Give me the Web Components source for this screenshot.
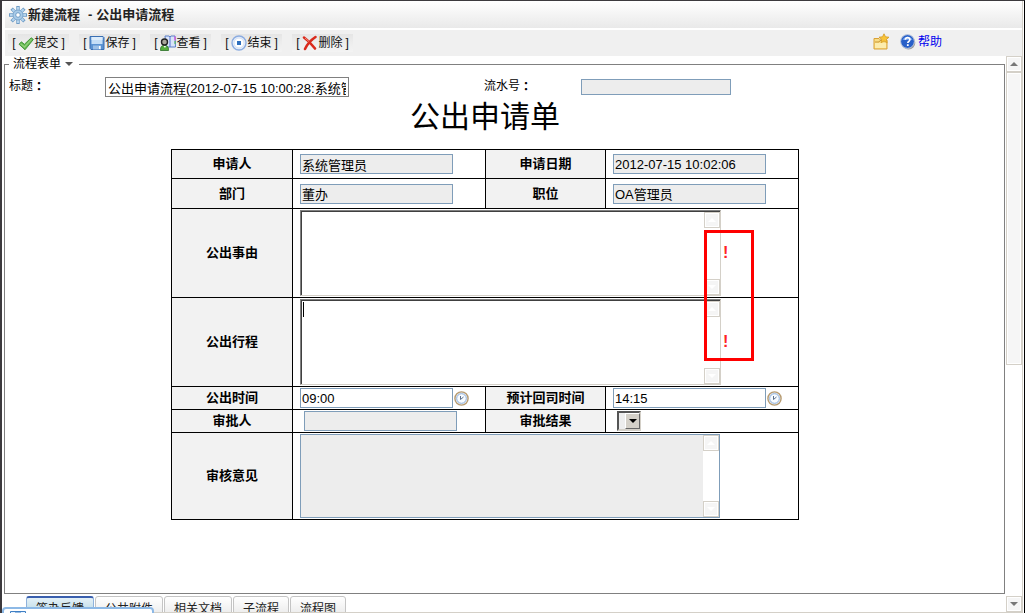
<!DOCTYPE html>
<html lang="zh-CN">
<head>
<meta charset="utf-8">
<title>新建流程 - 公出申请流程</title>
<style>
  html, body { margin: 0; height: 100%; }
  body { overflow: hidden; background: #fff; color: #000; font: 12px/16px "Liberation Sans", "Noto Sans CJK SC", sans-serif; }
</style>
</head>
<body>
<app-window>
  <title-bar slot="title" process="公出申请流程">新建流程</title-bar>
  <tool-bar slot="toolbar">
    <tool-button icon="check">提交</tool-button>
    <tool-button icon="disk">保存</tool-button>
    <tool-button icon="view">查看</tool-button>
    <tool-button icon="stop">结束</tool-button>
    <tool-button icon="cross">删除</tool-button>
    <help-links slot="end"></help-links>
  </tool-bar>
  <process-form></process-form>
  <tab-strip slot="tabs">
    <tab-item active>签办反馈</tab-item>
    <tab-item>公共附件</tab-item>
    <tab-item>相关文档</tab-item>
    <tab-item>子流程</tab-item>
    <tab-item>流程图</tab-item>
  </tab-strip>
  <scroll-rail slot="rail" class="page"></scroll-rail>
</app-window>

<script>
const define = (name, html) => customElements.define(name, class extends HTMLElement {
  constructor() {
    super();
    const root = this.attachShadow({ mode: 'open' });
    const t = document.createElement('template');
    t.innerHTML = typeof html === 'function' ? html(this) : html;
    root.append(t.content.cloneNode(true));
  }
});

const icons = {
  gear: `<svg viewBox="0 0 20 20" width="20" height="20"><g stroke="#6f9cc6" stroke-width="3.4"><path d="M10 1v18M1 10h18M3.6 3.6l12.8 12.8M16.4 3.6 3.6 16.4"/></g><g stroke="#b4d4ee" stroke-width="2"><path d="M10 2v16M2 10h16M4.3 4.3l11.4 11.4M15.7 4.3 4.3 15.7"/></g><circle cx="10" cy="10" r="5" fill="#a9cbe8" stroke="#7fa8ce"/><circle cx="10" cy="10" r="2.3" fill="#fff" stroke="#6f9cc6"/></svg>`,
  check: `<svg viewBox="0 0 16 16" width="16" height="16"><path d="M1 9.200 3.400 6.800l3 2.500L13.200 2.800l2.200 1.600L7 14.800z" fill="#5fb54c" stroke="#3f9238" stroke-width=".9"/><path d="M2.600 8.800 6.500 12l7-7.800" fill="none" stroke="#8fd07a" stroke-width="1.400"/></svg>`,
  disk: `<svg viewBox="0 0 16 16" width="16" height="16"><path d="M1 1.500h13l1 1v12H2l-1-1z" fill="#5b92d2" stroke="#3a6fb3"/><path d="M2.500 2h11v7h-11z" fill="#c5def7"/><path d="M2.500 2h11v3h-11z" fill="#dcecfb"/><path d="M4 10.500h8v4H4z" fill="#9cc0e8"/><path d="M10 11h1.500v3H10z" fill="#fff"/></svg>`,
  view: `<svg viewBox="0 0 16 16" width="16" height="16"><path d="M5 1h4l1 1 1-1h4l.5 11H6z" fill="#d9e4f8" stroke="#5b7fc8"/><path d="M10 2v10" stroke="#5573d8"/><path d="M14.500 1.500h1v4h-1z" fill="#e733d7"/><path d="M14.500 6h1v3h-1z" fill="#42b94d"/><path d="M.5 15.500c0-4 1-5 4-5s4 1 4 5z" fill="#55ae3c" stroke="#2b6e26" stroke-width=".8"/><path d="m3.500 11 1.500 2 1-2z" fill="#fff"/><circle cx="4.500" cy="7" r="3" fill="#a9a79a" stroke="#222" stroke-width="1.400"/></svg>`,
  stop: `<svg viewBox="0 0 16 16" width="16" height="16"><circle cx="8" cy="8" r="7" fill="#e5eefb" stroke="#8cace0" stroke-width="1.400"/><circle cx="8" cy="8" r="5" fill="#fff" stroke="#d4e0f4"/><path d="M6 6h4v4H6z" fill="#2f6fbe"/></svg>`,
  cross: `<svg viewBox="0 0 16 16" width="16" height="16"><path d="M2 2.500c4 2.800 7.500 6.500 11 11M13.500 2C9 5 5 9.500 3 14" fill="none" stroke="#d92a1c" stroke-width="2.600" stroke-linecap="round"/><path d="m3 3 4 3.500" stroke="#f28a78"/></svg>`,
  folder: `<svg viewBox="0 0 17 17" width="17" height="17"><path d="M1 5.500h5l1.500 1.500H14v9H1z" fill="#f9dc83" stroke="#d9a136"/><path d="M2 9h4l1-1.500h6" stroke="#c99838" fill="none"/><path d="M2 10h11v5H2z" fill="#fcecad"/><path d="m11 .8 1.500 3 3.500.4-2.600 2.200.8 3.300-3.200-1.700-3 1.700.7-3.400L6 4.200l3.500-.4z" fill="#f8c43a" stroke="#d39a24" stroke-width=".8"/></svg>`,
  help: `<svg viewBox="0 0 16 16" width="16" height="16"><circle cx="8.500" cy="8.800" r="6.800" fill="#9a9a9a"/><circle cx="7.500" cy="7.500" r="6.900" fill="#2860c8" stroke="#c4cddd"/><path d="M2.500 6a5.500 5.500 0 0 1 10 0z" fill="#6c9bec"/><path d="M5.300 5.800c0-3 4.800-2.800 4.600 0-.1 1.500-2 1.600-2.100 3.200" fill="none" stroke="#fff" stroke-width="1.700"/><path d="M6.900 10.200h1.800v1.800H6.900z" fill="#fff"/></svg>`,
  clock: `<svg viewBox="0 0 15 15" width="15" height="15"><circle cx="7.500" cy="7.500" r="6.600" fill="#e6edf7" stroke="#b79b70" stroke-width="1.400"/><circle cx="7.500" cy="7.500" r="4.800" fill="#f7fbff" stroke="#8fb0da"/><path d="M6.500 5v3.500L9.500 6" fill="none" stroke="#5a6f8c"/></svg>`
};

/* Outer frame: title, toolbar, then form + tabs beside the page scroll rail */
define('app-window', `
<style>
  :host { display: flex; flex-direction: column; position: relative; box-sizing: border-box; height: 100vh; overflow: hidden;
    border: solid #3c3a3e; border-width: 1px 1px 0 2px; border-right-color: #000; padding-right: 2px; }
  :host::before { content: ""; position: absolute; top: 0; right: 1px; bottom: 0; width: 1px; background: #d4d0c8; }
  .body { flex: 1; min-height: 0; display: flex; padding-left: 2px; gap: 1px; border-bottom: 1px solid #d4d0c8; }
  main { flex: 1; min-width: 0; display: flex; flex-direction: column; overflow: hidden; }
  .popup { position: absolute; left: 0; bottom: -11px; width: 148px; height: 13px; border: 2px solid #8db9e6; border-radius: 4px; background: #fff; }
  .popup svg { display: block; margin: 2px 0 0 6px; }
</style>
<slot name="title"></slot>
<slot name="toolbar"></slot>
<div class="body"><main><slot></slot><slot name="tabs"></slot></main><slot name="rail"></slot></div>
<div class="popup"><svg width="16" height="10" viewBox="0 0 16 10"><path d="M.5.5h15v9H.5z" fill="#eaf4ff" stroke="#3f7fc4"/><path d="M5 2h6" stroke="#3f7fc4"/></svg></div>`);

define('title-bar', el => `
<style>
  :host { display: flex; align-items: center; flex: none; height: 27px; margin-left: 3px; margin-bottom: 2px; padding-left: 3px; background: linear-gradient(#fff, #e9e9e9); color: #222; }
  svg { display: block; }
  h1 { display: flex; gap: 8px; margin: 0; font-size: 13px; line-height: 20px; font-weight: 700; }
  .process { display: flex; gap: 4px; }
</style>
${icons.gear}<h1><span><slot></slot></span><span class="process"><span>-</span><span>${el.getAttribute('process')}</span></span></h1>`);

define('tool-bar', `
<style>
  :host { display: flex; align-items: center; flex: none; height: 26px; margin-left: 3px; padding-left: 3px; gap: 10px; background: #f0f0f0; }
  .end { margin-left: auto; }
</style>
<slot></slot><div class="end"><slot name="end"></slot></div>`);

define('tool-button', el => `
<style>
  :host { display: block; }
  button { display: flex; align-items: center; justify-content: center; width: 61px; height: 18px; border: 0; padding: 0; background: linear-gradient(#e5e5e5, #ededed 50%, #f3f3f3); font: inherit; color: #111; white-space: nowrap; }
  svg { display: block; margin-left: 3px; }
  .close { margin-left: 3px; }
</style>
<button type="button"><span>[</span>${icons[el.getAttribute('icon')]}<slot></slot><span class="close">]</span></button>`);

define('help-links', `
<style>
  :host { display: flex; align-items: center; gap: 10px; margin-right: 80px; padding-bottom: 3px; }
  a { display: flex; align-items: center; gap: 2px; color: #00e; text-decoration: none; }
  svg { display: block; }
</style>
<a href="#favorite" aria-label="收藏">${icons.folder}</a><a href="#help">${icons.help}帮助</a>`);

/* Classic scrollbar: page variant has a thumb, the small one is inactive */
define('scroll-rail', `
<style>
  :host { display: flex; flex-direction: column; flex: none; width: 16px; box-sizing: border-box; background: #fff; --arrow: #fff; }
  :host(.page) { --arrow: #777; }
  button { display: grid; place-items: center; flex: none; height: 16px; width: 100%; padding: 0; border: 1px solid #d4d0c8; background: #f5f5f5; box-shadow: inset 0 0 0 1px #fff; }
  svg { display: block; fill: var(--arrow); }
  .track { flex: 1; min-height: 0; }
  .thumb { display: none; box-sizing: border-box; height: 56%; border: 1px solid #d4d0c8; background: #f6f6f6; box-shadow: inset 0 0 0 1px #fff; }
  :host(.page) .thumb { display: block; }
</style>
<button type="button" tabindex="-1" aria-label="向上滚动"><svg width="8" height="4"><path d="M0 4 4 0l4 4z"/></svg></button>
<div class="track"><div class="thumb"></div></div>
<button type="button" tabindex="-1" aria-label="向下滚动"><svg width="8" height="4"><path d="m0 0 4 4 4-4z"/></svg></button>`);

define('time-picker', `
<style>
  :host { display: block; }
  button { display: block; padding: 0; border: 0; background: none; }
  svg { display: block; }
</style>
<button type="button" aria-label="选择时间">${icons.clock}</button>`);

define('required-mark', `
<style>:host { display: block; color: #f22; font-size: 16px; font-weight: 700; line-height: 20px; }</style>
<span>!</span>`);

define('process-form', `
<style>
  :host { display: flex; flex: 1; min-height: 0; }
  fieldset { flex: 1; min-width: 0; margin: 0; padding: 4px 43px 0 4px; border: 1px solid #808080; }
  legend { display: flex; align-items: center; gap: 4px; padding: 0 6px 0 4px; height: 16px; }
  input, textarea { box-sizing: border-box; margin: 0; border: 1px solid #7f9db9; border-radius: 0; padding: 0 1px; font: 13px/16px "Liberation Sans", "Noto Sans CJK SC", sans-serif; color: #000; background: #fff; outline: 0; }
  input { width: 153px; height: 20px; }
  [readonly] { background: #ededed; }
  .head { display: grid; grid-template-columns: 96px 379px 97px 1fr; align-items: center; height: 22px; }
  .head label { display: flex; height: 18px; line-height: 16px; }
  .head .subject { width: 244px; border-color: #808080; padding: 0 2px; }
  .head .serial { width: 150px; height: 16px; }
  .colon { font-family: "Noto Sans CJK TC", sans-serif; font-weight: 700; }
  h2 { margin: 0; padding-bottom: 13px; text-align: center; font-size: 30px; line-height: 38px; font-weight: 400; }
  .sheet { position: relative; width: 628px; margin: 0 auto; }
  table { width: 628px; border-collapse: collapse; table-layout: fixed; }
  th, td { box-sizing: border-box; border: 1px solid #000; padding: 0; }
  th { background: #f2f2f2; font-size: 13px; font-weight: 700; line-height: 16px; }
  td { padding-left: 7px; }
  .row { display: flex; align-items: center; gap: 1px; }
  .area { display: flex; box-sizing: border-box; width: 421px; height: 86px; padding: 1px 0 0 1px; border: 1px solid; border-color: #808080 #d4d0c8 #d4d0c8 #808080; box-shadow: inset 1px 1px #404040; position: relative; }
  .area textarea { flex: 1; min-width: 0; border: 0; resize: none; overflow: hidden; background: transparent; }
  .area.locked { width: 420px; height: 84px; padding: 0; border: 1px solid #7f9db9; background: #ededed; box-shadow: none; }
  .caret { position: absolute; left: 2px; top: 2px; width: 1px; height: 15px; background: #000; }
  required-mark { margin-left: 1px; }
  .inset { margin-left: 4px; }
  .pick { display: flex; position: relative; width: 24px; height: 20px; margin-left: 4px; }
  select { appearance: none; box-sizing: border-box; width: 24px; height: 20px; margin: 0; border: 2px solid; border-color: #555 #d4d0c8 #d4d0c8 #555; border-radius: 0; padding: 0; background: #ededed; }
  .drop { position: absolute; right: 1px; top: 2px; width: 15px; height: 16px; display: grid; place-items: center; box-sizing: border-box; background: #d4d0c8; border: 1px solid; border-color: #fff #666 #666 #fff; pointer-events: none; }
  .highlight { position: absolute; left: 533px; top: 81px; box-sizing: border-box; width: 50px; height: 131px; border: 3px solid #f00; pointer-events: none; }
</style>
<fieldset>
  <legend>流程表单<svg width="8" height="4"><path d="m0 0 4 4 4-4z" fill="#555"/></svg></legend>
  <div class="head">
    <label for="subject">标题<span class="colon" lang="zh-TW">：</span></label><input id="subject" class="subject" value="公出申请流程(2012-07-15 10:00:28:系统管理员)">
    <label for="serial">流水号<span class="colon" lang="zh-TW">：</span></label><input id="serial" class="serial" readonly>
  </div>
  <h2>公出申请单</h2>
  <div class="sheet">
    <table>
      <colgroup><col style="width:121px"><col style="width:193px"><col style="width:120px"><col></colgroup>
      <tr style="height:29px"><th><label for="who">申请人</label></th><td><div class="row"><input id="who" readonly value="系统管理员"></div></td>
        <th><label for="date">申请日期</label></th><td><div class="row"><input id="date" readonly value="2012-07-15 10:02:06"></div></td></tr>
      <tr style="height:30px"><th><label for="dept">部门</label></th><td><div class="row"><input id="dept" readonly value="董办"></div></td>
        <th><label for="post">职位</label></th><td><div class="row"><input id="post" readonly value="OA管理员"></div></td></tr>
      <tr style="height:89px"><th><label for="reason">公出事由</label></th><td colspan="3"><div class="row"><div class="area"><textarea id="reason"></textarea><scroll-rail></scroll-rail></div><required-mark></required-mark></div></td></tr>
      <tr style="height:89px"><th><label for="trip">公出行程</label></th><td colspan="3"><div class="row"><div class="area"><textarea id="trip"></textarea><span class="caret"></span><scroll-rail></scroll-rail></div><required-mark></required-mark></div></td></tr>
      <tr style="height:23px"><th><label for="out">公出时间</label></th><td><div class="row"><input id="out" value="09:00"><time-picker></time-picker></div></td>
        <th><label for="back">预计回司时间</label></th><td><div class="row"><input id="back" value="14:15"><time-picker></time-picker></div></td></tr>
      <tr style="height:23px"><th><label for="approver">审批人</label></th><td><div class="row"><input id="approver" class="inset" readonly></div></td>
        <th><label for="result">审批结果</label></th><td><div class="pick"><select id="result"><option></option></select><span class="drop"><svg width="8" height="4"><path d="m0 0 4 4 4-4z"/></svg></span></div></td></tr>
      <tr style="height:87px"><th><label for="opinion">审核意见</label></th><td colspan="3"><div class="row"><div class="area locked"><textarea id="opinion" readonly></textarea><scroll-rail></scroll-rail></div></div></td></tr>
    </table>
    <div class="highlight"></div>
  </div>
</fieldset>`);

define('tab-strip', `
<style>:host { display: flex; flex: none; align-items: flex-start; gap: 1px; box-sizing: border-box; height: 18px; padding: 2px 0 0 22px; overflow: hidden; }</style>
<slot></slot>`);

define('tab-item', `
<style>
  :host { display: block; }
  button { display: block; height: 24px; padding: 2px 9px 0; border: 1px solid #c4c4c4; border-radius: 3px 3px 0 0; background: linear-gradient(#fff, #e6e6e6); font: inherit; color: #222; white-space: nowrap; }
  :host([active]) button { border-color: #8fb2dc; border-top: 2px solid #3a5fae; background: linear-gradient(#e4f1f8, #a9cfdc); padding-top: 1px; }
</style>
<button type="button"><slot></slot></button>`);
</script>
</body>
</html>
